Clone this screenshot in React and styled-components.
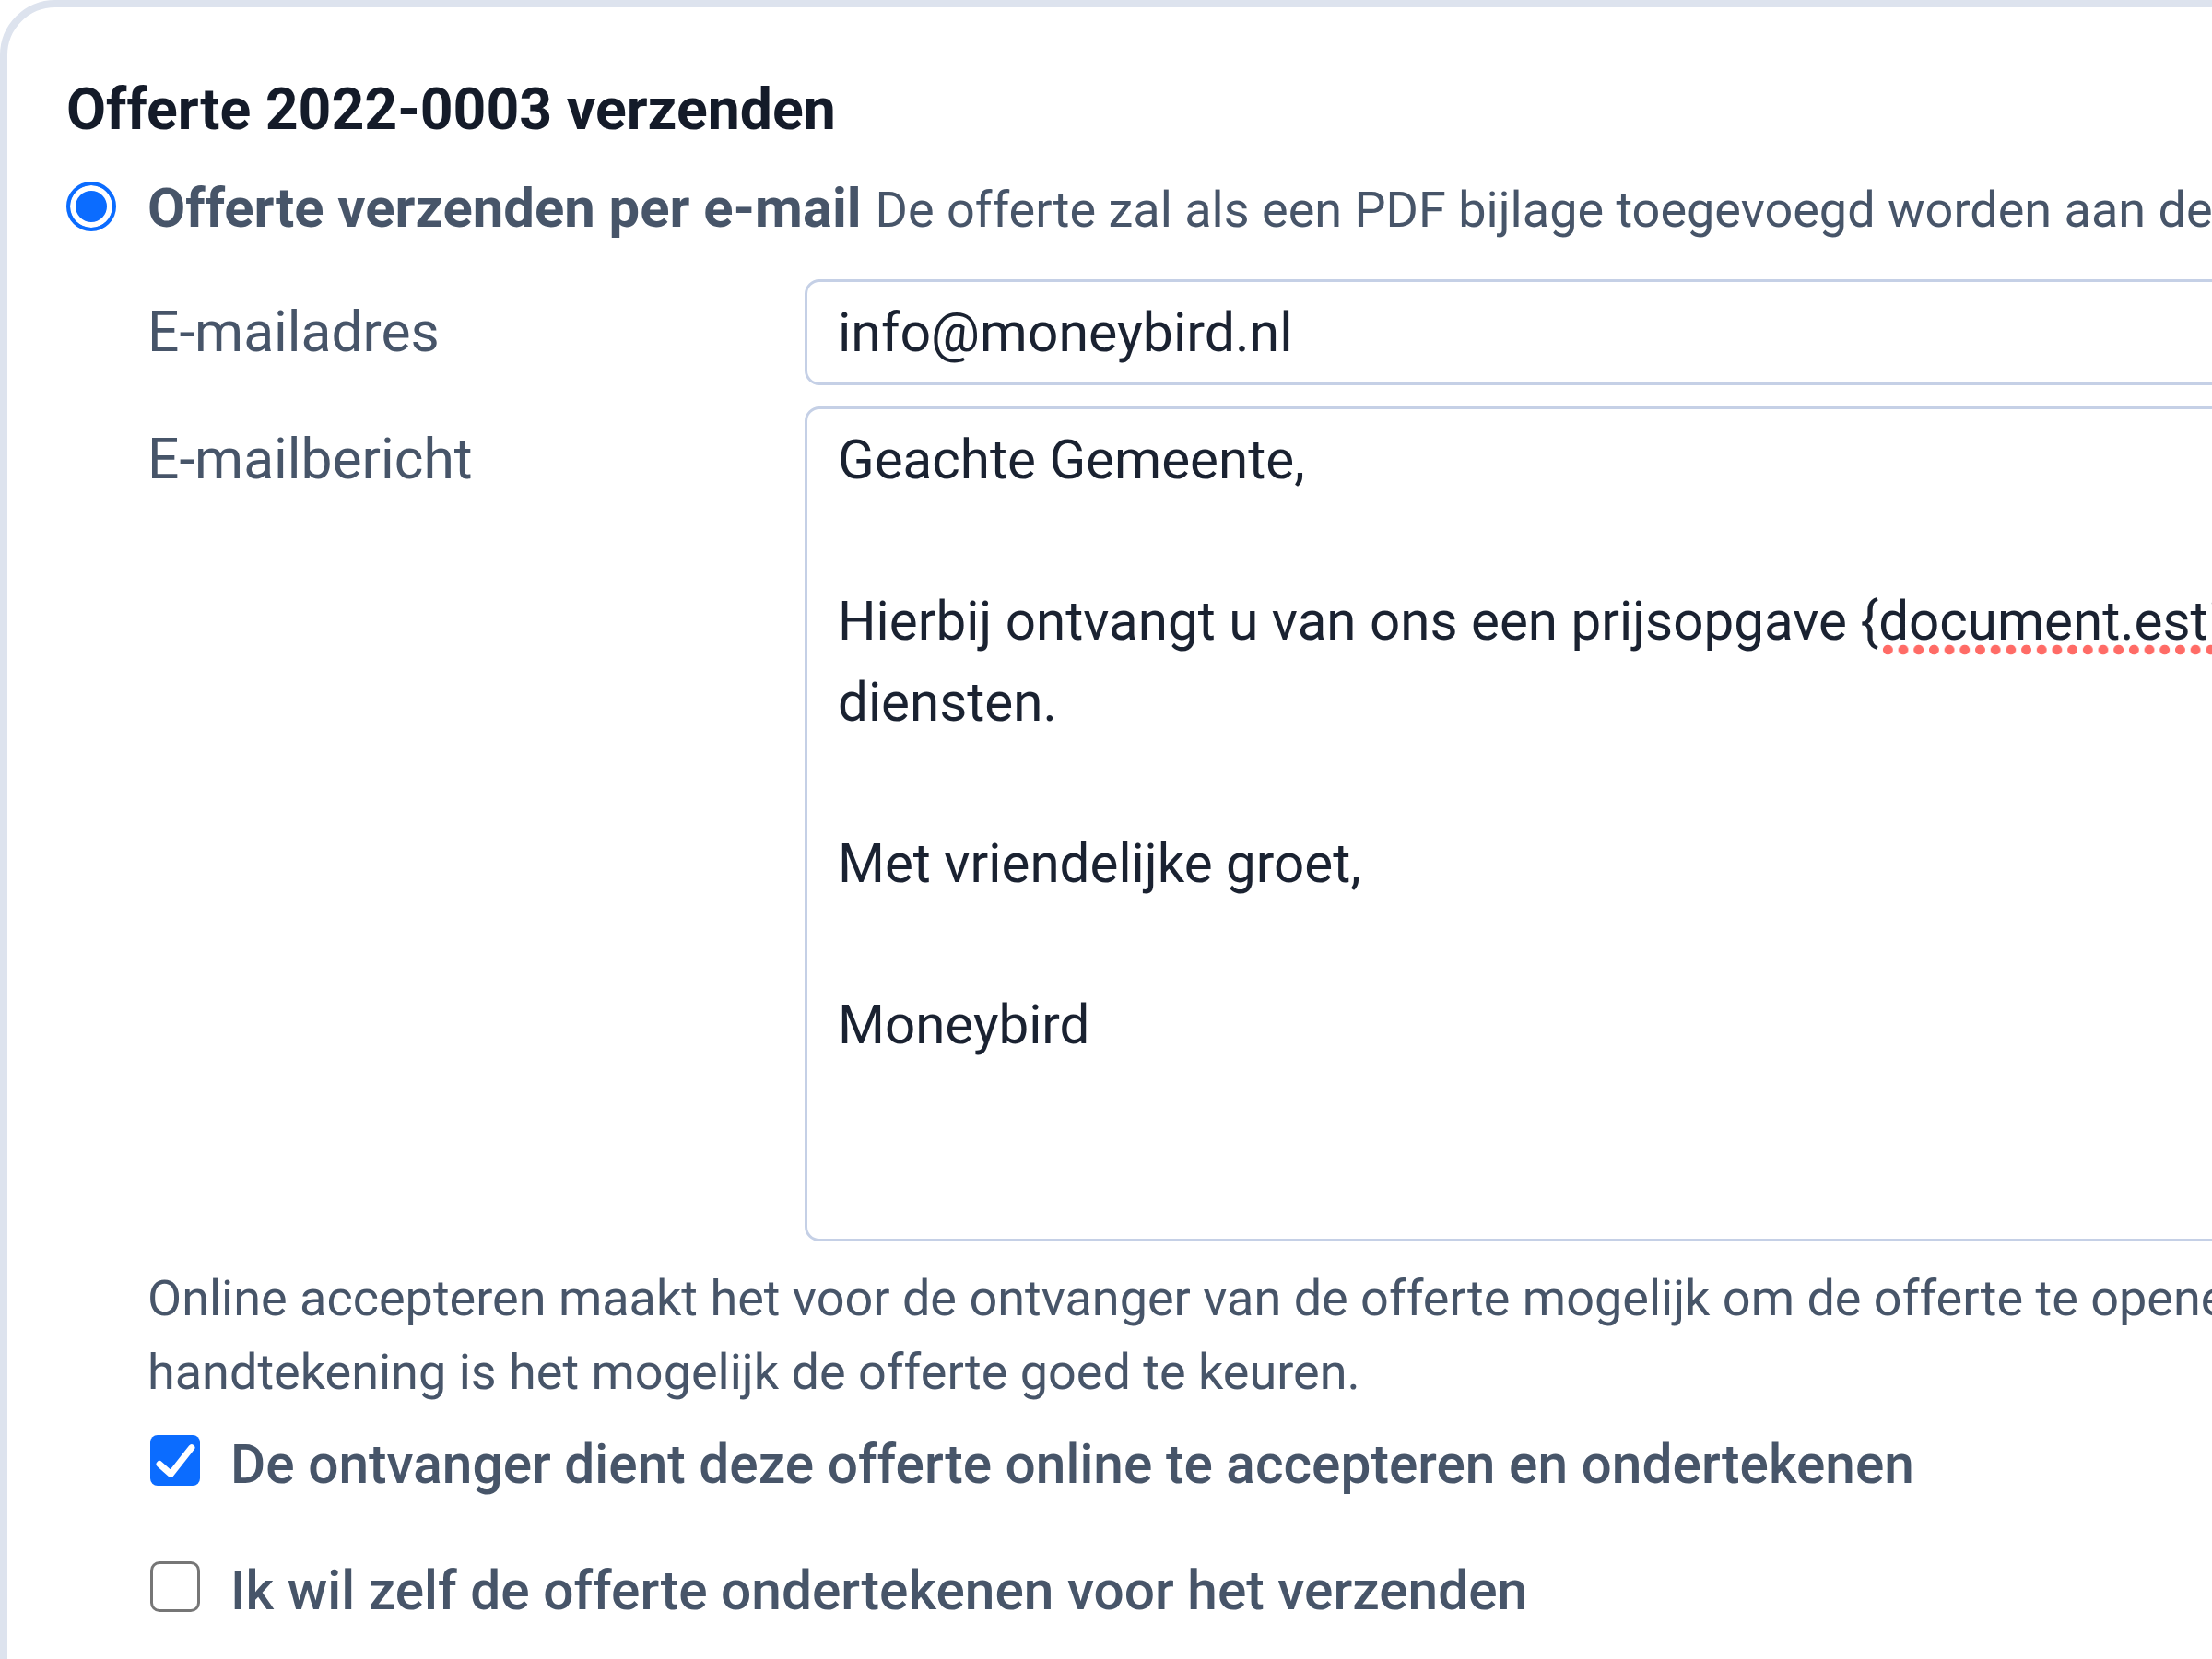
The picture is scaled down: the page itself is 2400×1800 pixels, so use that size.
import React from 'react';
import styled, { createGlobalStyle } from 'styled-components';

const GlobalStyle = createGlobalStyle`
  html, body {
    margin: 0;
    padding: 0;
    background: #ffffff;
  }
  body {
    overflow: hidden;
    font-family: Roboto, "Liberation Sans", Arial, sans-serif;
  }
`;

const Page = styled.div`
  width: 2400px;
  height: 1800px;
  overflow: hidden;
  background: #ffffff;
`;

const Card = styled.section`
  box-sizing: border-box;
  width: 3000px;
  min-height: 2000px;
  border: 8px solid #dde3ee;
  border-radius: 60px;
  padding: 75px 0 0 64px;
`;

const Title = styled.h2`
  margin: 0;
  font-size: 62.5px;
  line-height: 72px;
  font-weight: 700;
  color: #141b29;
`;

const OptionRow = styled.label`
  display: flex;
  align-items: flex-start;
  gap: 34px;
  margin-top: 35px;
  white-space: nowrap;
`;

const Radio = styled.span`
  box-sizing: border-box;
  flex: none;
  width: 54px;
  height: 54px;
  margin-top: 7px;
  border-radius: 50%;
  border: 4px solid #0b6cff;
  background: #0b6cff;
  box-shadow: inset 0 0 0 6px #ffffff;
`;

const OptionText = styled.span`
  font-size: 59.8px;
  line-height: 72px;
  font-weight: 700;
  color: #475569;
`;

const OptionHint = styled.span`
  font-size: 54px;
  line-height: 1;
  font-weight: 400;
`;

const Fields = styled.div`
  display: grid;
  grid-template-columns: 713px 1fr;
  row-gap: 23px;
  margin: 41px 0 0 88px;
`;

const FieldLabel = styled.label`
  font-size: 60.5px;
  line-height: 115px;
  color: #475569;
`;

const Input = styled.input`
  box-sizing: border-box;
  width: 100%;
  height: 115px;
  margin: 0;
  padding: 0 33px;
  border: 3px solid #c5d0e6;
  border-radius: 16px;
  font: inherit;
  font-size: 59px;
  color: #1a2231;
  background: #ffffff;
  outline: none;
`;

const MessageBox = styled.div`
  box-sizing: border-box;
  height: 906px;
  padding: 12px 33px;
  border: 3px solid #c5d0e6;
  border-radius: 16px;
  font-size: 58.3px;
  line-height: 87.6px;
  color: #1a2231;
  white-space: pre;
  overflow: hidden;
`;

const Misspelled = styled.span`
  padding-bottom: 3px;
  background-image: radial-gradient(circle, #ff6b66 5px, transparent 5.7px);
  background-size: 16.7px 12px;
  background-repeat: repeat-x;
  background-position: 2px bottom;
`;

const Help = styled.p`
  margin: 22px 0 0 88px;
  font-size: 54px;
  line-height: 80px;
  color: #475569;
  white-space: nowrap;
`;

const CheckList = styled.div`
  display: flex;
  flex-direction: column;
  gap: 49px;
  margin: 16px 0 0 91px;
`;

const CheckRow = styled.label`
  display: flex;
  align-items: flex-start;
  gap: 33px;
`;

const Box = styled.span`
  box-sizing: border-box;
  flex: none;
  display: flex;
  align-items: center;
  justify-content: center;
  width: 54px;
  height: 55px;
  margin-top: 12px;
  border-radius: ${(p) => (p.checked ? '8px' : '10px')};
  border: ${(p) => (p.checked ? 'none' : '3px solid #767676')};
  background: ${(p) => (p.checked ? '#0b6cff' : '#ffffff')};
`;

const CheckText = styled.span`
  font-size: 58.6px;
  line-height: 88px;
  font-weight: 500;
  color: #475569;
`;

function Checkbox({ checked, children }) {
  return (
    <CheckRow>
      <Box checked={checked}>
        {checked && (
          <svg width="54" height="55" viewBox="0 0 16 16">
            <path d="M3 9.2 L6.6 12.4 L13.3 3.9" fill="none" stroke="#fff" strokeWidth="2.1" strokeLinecap="round" strokeLinejoin="round" />
          </svg>
        )}
      </Box>
      <CheckText>{children}</CheckText>
    </CheckRow>
  );
}

export default function App() {
  return (
    <Page>
      <GlobalStyle />
      <Card>
        <Title>Offerte 2022-0003 verzenden</Title>
        <OptionRow>
          <Radio />
          <OptionText>
            Offerte verzenden per e-mail{' '}
            <OptionHint>
              De offerte zal als een PDF bijlage toegevoegd worden aan de e-mail naar de ontvanger.
            </OptionHint>
          </OptionText>
        </OptionRow>
        <Fields>
          <FieldLabel htmlFor="email">E-mailadres</FieldLabel>
          <Input id="email" defaultValue="info@moneybird.nl" readOnly />
          <FieldLabel>E-mailbericht</FieldLabel>
          <MessageBox>
            {'Geachte Gemeente,\n\nHierbij ontvangt u van ons een prijsopgave {'}
            <Misspelled>document.estimate_id</Misspelled>
            {'} voor onze\ndiensten.\n\nMet vriendelijke groet,\n\nMoneybird'}
          </MessageBox>
        </Fields>
        <Help>
          Online accepteren maakt het voor de ontvanger van de offerte mogelijk om de offerte te openen in de browser. Met een digitale
          <br />
          handtekening is het mogelijk de offerte goed te keuren.
        </Help>
        <CheckList>
          <Checkbox checked>De ontvanger dient deze offerte online te accepteren en ondertekenen</Checkbox>
          <Checkbox>Ik wil zelf de offerte ondertekenen voor het verzenden</Checkbox>
        </CheckList>
      </Card>
    </Page>
  );
}
